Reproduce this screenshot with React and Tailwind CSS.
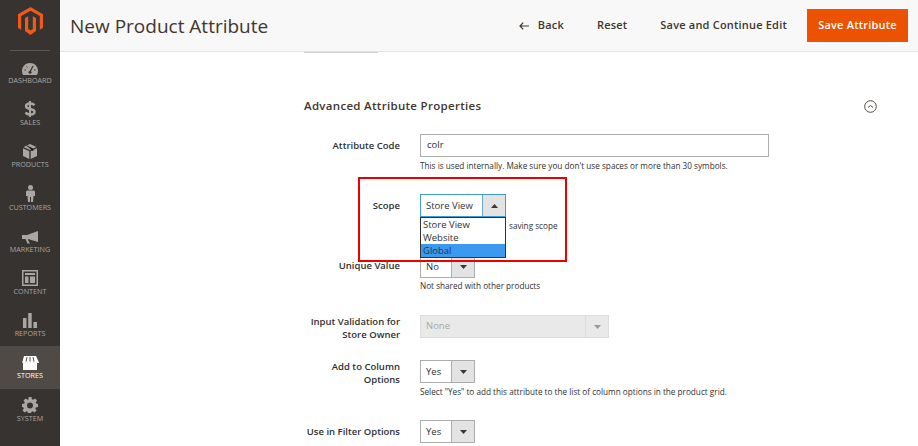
const font = { fontFamily: '"Open Sans", sans-serif' };

const icons = {
  DASHBOARD: (
    <svg width="16" height="12" viewBox="0 0 16 12"><path fill="currentColor" d="M8 0C3.600 0 0 3.500 0 8c0 1.500.3 2.800 1 4h14c.7-1.200 1-2.500 1-4 0-4.500-3.600-8-8-8z" /><path stroke="#373330" strokeWidth="1.300" d="M8 9 L11 3" /><circle cx="8" cy="9.200" r="1.500" fill="#373330" /><path stroke="#373330" strokeWidth="1" d="M2.500 7h1.500M12 7h1.500M4.500 3.500l1 1" /></svg>
  ),
  SALES: (
    <svg width="12" height="16" viewBox="0 0 12 16"><path fill="none" stroke="currentColor" strokeWidth="2.400" d="M10.500 4.300C9.500 3 8 2.500 6 2.500c-2.500 0-4 1.100-4 2.800 0 3.700 8.500 1.700 8.500 5.400 0 1.800-1.800 2.800-4.300 2.800-2 0-3.700-.6-4.700-2" /><path stroke="currentColor" strokeWidth="2" d="M6 0v16" /></svg>
  ),
  PRODUCTS: (
    <svg width="14" height="15" viewBox="0 0 14 15"><path fill="currentColor" d="M7 0 L13.500 3 L7 6 L.500 3Z M0 4.200 L6.300 7.200 V15 L0 12Z M14 4.200 L7.700 7.200 V15 L14 12Z" /><path stroke="#373330" strokeWidth=".8" d="M3.500 1.600 L10 4.800 V7" /></svg>
  ),
  CUSTOMERS: (
    <svg width="9" height="17" viewBox="0 0 9 17"><circle cx="4.500" cy="2.500" r="2.500" fill="currentColor" /><path fill="currentColor" d="M1 5.500h7l1 1V11H7.500L7 17H5V12H4V17H2L1.500 11H0V6.500z" /></svg>
  ),
  MARKETING: (
    <svg width="16" height="13" viewBox="0 0 16 13"><path fill="currentColor" d="M16 0 V11 L6 8 V9 L8 12.500 H5.500 L3.500 8 H0 V4 H5Z" /></svg>
  ),
  CONTENT: (
    <svg width="16" height="16" viewBox="0 0 16 16"><path fill="currentColor" fillRule="evenodd" d="M0 0h16v16H0Z M1.500 1.500v13h13v-13Z" /><path fill="currentColor" d="M3 3h10v2H3Z M3 6.500h3.500V13H3Z M8 6.500h5V13H8Z" /></svg>
  ),
  REPORTS: (
    <svg width="14" height="15" viewBox="0 0 14 15"><path fill="currentColor" d="M0 5h3.500v10H0Z M5.200 0h3.500v15H5.200Z M10.400 9H14v6H10.400Z" /></svg>
  ),
  STORES: (
    <svg width="18" height="14" viewBox="0 0 18 14"><path fill="currentColor" d="M2 6.500h14V14H2Z" /><path fill="currentColor" d="M3 0h12l3 6.500c-.8.800-2 .8-2.800 0-.8.800-2 .8-2.800 0-.9.800-2 .8-2.800 0-.8.800-2 .8-2.800 0-.8.800-2 .8-2.800 0-.7.800-2 .800-2.800 0Z" /><path stroke="#4f4a45" strokeWidth="1" d="M6 1 L5 5.500 M9 1 V5.500 M12 1 L13 5.500" /></svg>
  ),
  SYSTEM: (
    <svg width="16" height="16" viewBox="0 0 16 16"><path fill="currentColor" fillRule="evenodd" d="M6.500 0h3l.4 2.300 1.200.5L13 1.500l2 2.100-1.300 1.900.5 1.100L16 7v3l-2.200.4-.5 1.200 1.300 1.900-2.100 2.100-1.900-1.300-1.200.5-.4 1.700h-3l-.4-1.800-1.100-.5-1.900 1.300-2.100-2.100 1.300-1.900-.5-1.200L0 10V7l2.300-.4.500-1.100L1.500 3.600 3.600 1.500l1.900 1.300 1.100-.5ZM8 5.500a3 3 0 1 0 0 6 3 3 0 0 0 0-6Z" /></svg>
  ),
};

const nav = ["DASHBOARD", "SALES", "PRODUCTS", "CUSTOMERS", "MARKETING", "CONTENT", "REPORTS", "STORES", "SYSTEM"];

function Arrow({ up, muted }) {
  return (
    <svg width="7" height="4" viewBox="0 0 7 4" className={muted ? "text-[#9a9a9a]" : "text-[#41362f]"}>
      <path fill="currentColor" d={up ? "M3.500 0L7 4H0Z" : "M0 0h7L3.500 4Z"} />
    </svg>
  );
}

function Select({ value }) {
  return (
    <div className="flex h-[23px] w-[55px] border border-[#adadad] bg-white text-[9.500px] leading-[21px] text-[#303030]">
      <span className="flex-1 pl-[5px]">{value}</span>
      <span className="flex w-[23px] items-center justify-center border-l border-[#adadad] bg-[#e3e3e3]"><Arrow /></span>
    </div>
  );
}

function Label({ children }) {
  return <div className="w-[96px] text-right text-[9.500px] font-semibold leading-[13px] text-[#303030]">{children}</div>;
}

function Note({ children, className }) {
  return <div className={`text-[8.200px] leading-[13px] text-[#303030] ${className}`}>{children}</div>;
}

export default function App() {
  return (
    <div className="relative flex h-[446px] w-[918px] overflow-hidden bg-white" style={font}>
      <aside className="flex w-[60px] shrink-0 flex-col bg-[#373330]">
        <div className="mx-[10px] flex h-[51px] shrink-0 items-start justify-center border-b border-[#5a5652] pt-[7px]">
          <svg width="25" height="28" viewBox="0 0 25 28">
            <path fill="#f1591a" d="M12.500 0 L25 7.200 V21 L21.800 22.800 V9 L12.500 3.700 L3.200 9 V22.800 L0 21 V7.200Z" />
            <path fill="#f1591a" d="M7 11 L10.200 9.200 V22 L12.500 23.300 L14.800 22 V9.200 L18 11 V24 L12.500 28 L7 24Z" />
          </svg>
        </div>
        {nav.map((n) => (
          <div key={n} className={`flex h-[42.200px] shrink-0 flex-col items-center ${n === "STORES" ? "bg-[#4f4a45] text-white" : "text-[#a9a6a3]"}`}>
            <div className="flex h-[24px] items-end justify-center pt-[8px]">{icons[n]}</div>
            <div className="text-[7.200px] leading-[10px]">{n}</div>
          </div>
        ))}
      </aside>

      <main className="flex min-w-0 flex-1 flex-col">
        <header className="flex h-[52px] shrink-0 items-center border-b border-[#e3e3e3] bg-[#f8f8f8] pl-[10px] pr-[10px] text-[#41362f]">
          <h1 className="flex-1 text-[19px] font-normal leading-[26px]">New Product Attribute</h1>
          <div className="flex items-center text-[11px] font-semibold tracking-[.2px]">
            <svg width="10" height="8" viewBox="0 0 10 8" className="mr-[9px]"><path fill="none" stroke="#41362f" strokeWidth="1.200" d="M10 4H1M4.200 .7L1 4l3.200 3.300" /></svg>
            <span>Back</span>
            <span className="ml-[33px]">Reset</span>
            <span className="ml-[33px]">Save and Continue Edit</span>
            <span className="ml-[20px] flex h-[33px] w-[101px] items-center justify-center bg-[#eb5202] text-white">Save Attribute</span>
          </div>
        </header>

        <div className="relative flex-1 overflow-hidden pl-[244px]">
          <div className="h-[1px] w-[74px] bg-[#cfcfcf]" />
          <div className="mt-[45px] flex h-[16px] w-[573px] items-center justify-between">
            <h2 className="text-[11.500px] font-semibold leading-[16px] tracking-[.3px] text-[#41362f]">Advanced Attribute Properties</h2>
            <svg width="13" height="13" viewBox="0 0 13 13"><circle cx="6.500" cy="6.500" r="5.800" fill="none" stroke="#514943" /><path fill="none" stroke="#514943" d="M4 7.500l2.500-2 2.500 2" /></svg>
          </div>

          <div className="mt-[20px] flex">
            <Label><span className="block pt-[5px] text-right">Attribute Code</span></Label>
            <div className="ml-[20px]">
              <div className="h-[23px] w-[349px] border border-[#adadad] pl-[6px] text-[9.500px] leading-[19px] text-[#303030]">colr</div>
              <Note className="mt-[2px]">This is used internally. Make sure you don't use spaces or more than 30 symbols.</Note>
            </div>
          </div>

          <div className="mt-[22px] flex h-[41px]">
            <Label><span className="block pt-[5px] text-right">Scope</span></Label>
            <div className="ml-[20px] flex">
              <div className="h-[23px] w-[86px]" />
              <Note className="ml-[3px] mt-[25px]">saving scope</Note>
            </div>
          </div>

          <div className="mt-[20px] flex">
            <Label><span className="block pt-[4px] text-right">Unique Value</span></Label>
            <div className="ml-[20px]">
              <Select value="No" />
              <Note className="mt-[1px]">Not shared with other products</Note>
            </div>
          </div>

          <div className="mt-[23px] flex">
            <Label>Input Validation for Store Owner</Label>
            <div className="ml-[20px] flex h-[23px] w-[189px] border border-[#dcdcdc] bg-[#e9e9e9] text-[9.500px] leading-[20px] text-[#a8a8a8]">
              <span className="flex-1 pl-[5px]">None</span>
              <span className="flex w-[23px] items-center justify-center border-l border-[#dcdcdc]"><Arrow muted /></span>
            </div>
          </div>

          <div className="mt-[19px] flex">
            <Label>Add to Column Options</Label>
            <div className="ml-[20px]">
              <Select value="Yes" />
              <Note className="mt-[2px]">Select "Yes" to add this attribute to the list of column options in the product grid.</Note>
            </div>
          </div>

          <div className="mt-[22px] flex">
            <Label><span className="block whitespace-nowrap pt-[5px] text-right">Use in Filter Options</span></Label>
            <div className="ml-[20px]"><Select value="Yes" /></div>
          </div>
        </div>
      </main>

      {/* Open dropdown and the annotation frame lie over the form */}
      <div className="absolute left-[420px] top-[194px] w-[86px]">
        <div className="flex h-[23px] border border-[#3f9ad6] bg-white text-[9.500px] leading-[21px] text-[#303030]">
          <span className="flex-1 pl-[5px]">Store View</span>
          <span className="flex w-[23px] items-center justify-center border-l border-[#6aa9d6] bg-[#e3e3e3]"><Arrow up /></span>
        </div>
        <div className="border border-[#333] bg-white text-[9.500px] leading-[13px] text-[#303030]">
          <div className="pl-[2px]">Store View</div>
          <div className="pl-[2px]">Website</div>
          <div className="bg-[#3b99f0] pl-[2px] text-[#1f3550]">Global</div>
        </div>
      </div>
      <div className="pointer-events-none absolute left-[358px] top-[177px] h-[85px] w-[209px] border-2 border-[#ee0000]" />
    </div>
  );
}
